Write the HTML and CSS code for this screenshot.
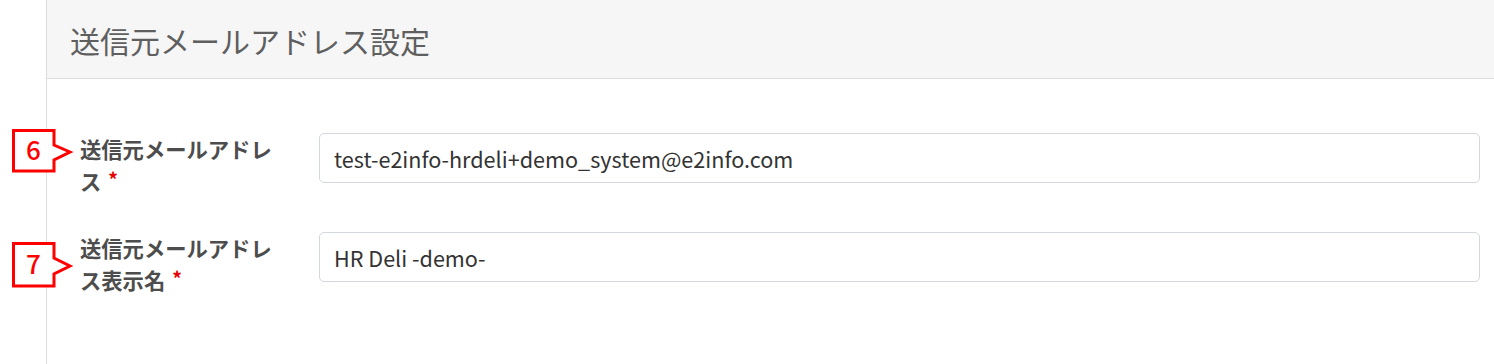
FILE: index.html
```html
<!DOCTYPE html>
<html lang="ja">
<head>
    <meta charset="UTF-8">
    <title>送信元メールアドレス設定</title>
    <link rel="stylesheet" href="styles.css">
</head>
<body>
    <div class="panel">
        <div class="panel-heading">
            <h2 class="panel-title">送信元メールアドレス設定</h2>
        </div>
        <div class="panel-body">
            <div class="form-row">
                <!-- callout 6 -->
                <svg class="marker marker-6" width="62" height="46" viewBox="0 0 62 46">
                    <polygon points="1.5,1.5 42,1.5 42,16 58,23 42,31 42,42 1.5,42" />
                    <text x="21.5" y="31">6</text>
                </svg>
                <label class="form-label">送信元メールアドレス<span class="req">*</span></label>
                <input class="form-input" type="text" value="test-e2info-hrdeli+demo_system@e2info.com">
            </div>
            <div class="form-row">
                <!-- callout 7 -->
                <svg class="marker marker-7" width="62" height="46" viewBox="0 0 62 46">
                    <polygon points="1.5,1.5 42,1.5 42,16 58,24 42,32 42,44 1.5,44" />
                    <text x="21.5" y="32">7</text>
                </svg>
                <label class="form-label">送信元メールアドレス表示名<span class="req">*</span></label>
                <input class="form-input" type="text" value="HR Deli -demo-">
            </div>
        </div>
    </div>
</body>
</html>
```

FILE: styles.css
```css
* {
    margin: 0;
    padding: 0;
    box-sizing: border-box;
}

body {
    background: #fff;
    font-family: "Noto Sans CJK JP", "Noto Sans", sans-serif;
    overflow: hidden;
}

.panel {
    margin-left: 46px;
    min-height: 100vh;
    border-left: 1px solid #dddddd;
}

.panel-heading {
    height: 79px;
    background: #f6f6f6;
    border-bottom: 1px solid #dddddd;
    display: flex;
    align-items: center;
    padding-left: 23px;
}

.panel-title {
    font-size: 30px;
    font-weight: 400;
    color: #5f5f5f;
    line-height: 1;
    margin-top: 2px;
}

.panel-body {
    padding: 54px 14px 0 33px;
}

.form-row {
    position: relative;
    display: grid;
    grid-template-columns: 200px 1fr;
    column-gap: 39px;
    align-items: start;
    margin-bottom: 35px;
}

.form-label {
    font-size: 21.3px;
    font-weight: 700;
    line-height: 32px;
    color: #4d4d4d;
}

.req {
    display: inline-block;
    color: #e60000;
    font-size: 19px;
    line-height: 19px;
    margin-left: 7px;
    vertical-align: top;
    margin-top: 4px;
}

.form-input {
    width: 100%;
    height: 50px;
    padding: 0 14px;
    border: 1px solid #d3d8de;
    border-radius: 5px;
    background: #fff;
    font-family: "Noto Sans CJK JP", "Noto Sans", sans-serif;
    font-size: 21.6px;
    color: #333;
    outline: none;
}

.marker {
    position: absolute;
    left: -68px;
    overflow: visible;
}

.marker polygon {
    fill: #fff;
    stroke: #f00;
    stroke-width: 3;
}

.marker text {
    fill: #f00;
    font-family: "Noto Sans CJK JP", sans-serif;
    font-size: 26px;
    font-weight: 500;
    text-anchor: middle;
}

.marker-6 {
    top: -4px;
}

.marker-7 {
    top: 10px;
}
```
